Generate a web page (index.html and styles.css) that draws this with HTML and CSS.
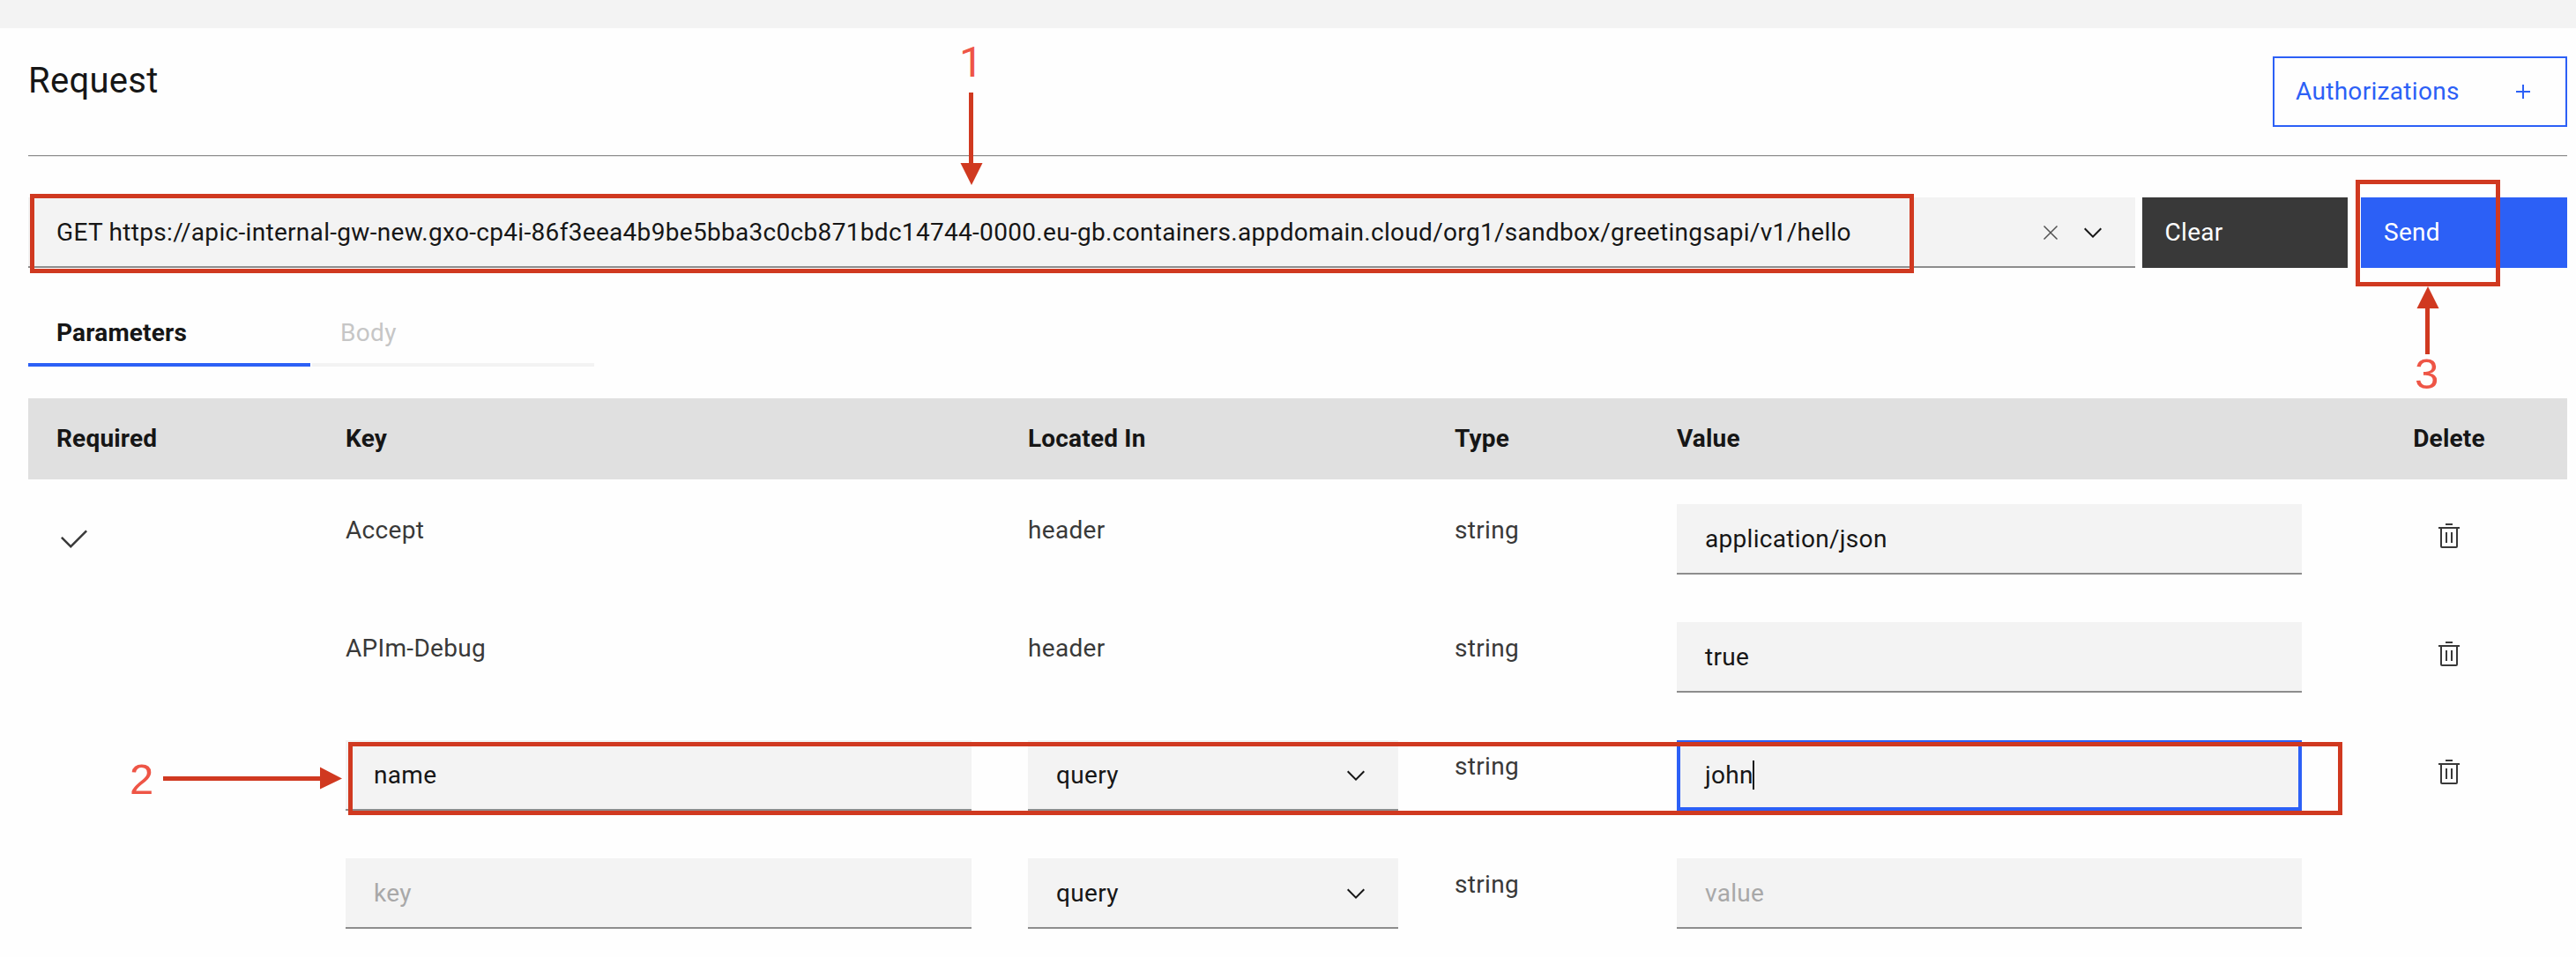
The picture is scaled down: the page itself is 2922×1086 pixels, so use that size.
FILE: index.html
```html
<!DOCTYPE html>
<html lang="en">
<head>
<meta charset="utf-8">
<title>Request</title>
<link rel="stylesheet" href="styles.css">
</head>
<body>
<svg class="sprite" aria-hidden="true">
  <symbol id="chevron" viewBox="0 0 16 16"><path d="M8 11L3 6 3.7 5.3 8 9.6 12.3 5.3 13 6z"/></symbol>
  <symbol id="trash" viewBox="0 0 32 32"><path d="M12 12H14V24H12zM18 12H20V24H18z"/><path fill-rule="evenodd" d="M4 6V8H6V28a2 2 0 002 2H24a2 2 0 002-2V8h2V6zM8 28V8H24V28z"/><path d="M12 2H20V4H12z"/></symbol>
</svg>
<main class="page">
  <header class="heading">
    <h1 class="title">Request</h1>
    <button class="btn btn-outline">Authorizations
      <svg class="icon" viewBox="0 0 32 32"><path d="M17 15V8H15v7H8v2h7v7h2V17h7V15z"/></svg>
    </button>
  </header>

  <section class="url-bar">
    <div class="field url-field">
      <span class="url">GET https://apic-internal-gw-new.gxo-cp4i-86f3eea4b9be5bba3c0cb871bdc14744-0000.eu-gb.containers.appdomain.cloud/org1/sandbox/greetingsapi/v1/hello</span>
      <svg class="icon icon-close" viewBox="0 0 32 32"><path d="M8.5 8.500l15 15M23.500 8.500l-15 15"/></svg>
      <svg class="icon"><use href="#chevron"/></svg>
    </div>
    <button class="btn btn-dark">Clear</button>
    <button class="btn btn-primary">Send</button>
  </section>

  <nav class="tabs">
    <div class="tab tab-active">Parameters</div>
    <div class="tab">Body</div>
  </nav>

  <section class="table">
    <div class="row row-head">
      <div class="cell-req">Required</div><div>Key</div><div>Located In</div><div>Type</div><div>Value</div><div class="cell-del">Delete</div>
    </div>
    <div class="row">
      <div class="cell-req"><svg class="icon check" viewBox="0 0 32 32"><path d="M13 24L4 15 5.414 13.586 13 21.171 26.586 7.586 28 9z"/></svg></div>
      <div class="text">Accept</div><div class="text">header</div><div class="text">string</div>
      <div class="field value">application/json</div>
      <div class="cell-del"><svg class="icon trash"><use href="#trash"/></svg></div>
    </div>
    <div class="row">
      <div></div>
      <div class="text">APIm-Debug</div><div class="text">header</div><div class="text">string</div>
      <div class="field value">true</div>
      <div class="cell-del"><svg class="icon trash"><use href="#trash"/></svg></div>
    </div>
    <div class="row">
      <div></div>
      <div class="field key">name</div>
      <div class="field select">query<svg class="icon"><use href="#chevron"/></svg></div>
      <div class="text">string</div>
      <div class="field value focused"><span class="typed">john</span></div>
      <div class="cell-del"><svg class="icon trash"><use href="#trash"/></svg></div>
    </div>
    <div class="row">
      <div></div>
      <div class="field key placeholder">key</div>
      <div class="field select">query<svg class="icon"><use href="#chevron"/></svg></div>
      <div class="text">string</div>
      <div class="field value placeholder">value</div>
      <div></div>
    </div>
  </section>
</main>

<div class="mark mark-url"></div>
<div class="mark mark-row"></div>
<div class="mark mark-send"></div>
<svg class="arrows" viewBox="0 0 2922 1086" aria-hidden="true">
  <path d="M1099 105h5v80h10.500L1102 210 1089.500 185H1099z"/>
  <path d="M185 881h178V870.500L388 883.500 363 895.500V886H185z"/>
  <path d="M2751 402V350H2741.500L2754 325 2766.500 350H2756v52z"/>
</svg>
<span class="num num-1">1</span>
<span class="num num-2">2</span>
<span class="num num-3">3</span>
</body>
</html>
```

FILE: styles.css
```css
* { box-sizing: border-box; }

body {
  margin: 0;
  position: relative;
  height: 1086px;
  overflow: hidden;
  background: #fefefe;
  color: #161616;
  font: 400 28px/36px Roboto, "Liberation Sans", sans-serif;
  letter-spacing: 0.31px;
}

.sprite { position: absolute; width: 0; height: 0; }

.page {
  border-top: 32px solid #f3f3f3;
  padding: 0 10px 0 32px;
}

.icon { display: block; flex: none; width: 32px; height: 32px; fill: currentColor; }

.heading {
  display: flex;
  justify-content: space-between;
  align-items: flex-start;
  height: 146px;
  padding-top: 32px;
  border-bottom: 1px solid #e4e4e4;
  box-shadow: inset 0 -1px #8d8d8d;
}

.title { margin: 2px 0 0; font-size: 40px; line-height: 52px; font-weight: 400; letter-spacing: 0.3px; }

.btn {
  display: flex;
  align-items: center;
  justify-content: space-between;
  height: 80px;
  padding: 0 26px;
  border: 0;
  font: inherit;
  letter-spacing: inherit;
  color: #fff;
}
.btn-outline { width: 334px; padding: 0 32px 0 24px; border: 2px solid #2c60f6; background: none; color: #2c60f6; }
.btn-dark { width: 233px; padding: 0 25.5px; background: #393939; }
.btn-primary { width: 234px; margin-left: 15px; background: #2c60f6; }

.url-bar { display: flex; margin-top: 46px; }

.field {
  display: flex;
  align-items: center;
  height: 80px;
  padding: 0 32px;
  background: #f3f3f3;
  box-shadow: inset 0 -2px #8d8d8d;
}
.url-field { flex: 1; margin-right: 8px; gap: 16px; }
.url { flex: 1; white-space: nowrap; }
.icon-close { fill: none; stroke: #525252; stroke-width: 1.5; }

.tabs { display: flex; gap: 2px; margin-top: 32px; }
.tab { width: 320px; height: 80px; padding: 24px 32px 0; border-bottom: 4px solid #f3f3f3; color: #c6c6c6; }
.tab-active { border-color: #2c60f6; color: #161616; font-weight: 700; letter-spacing: 0.18px; }

.table { margin-top: 36px; }
.row {
  display: grid;
  grid-template-columns: 360px 774px 484px 252px 835px 82px;
  align-items: start;
  height: 134px;
  padding-top: 28px;
  color: #393939;
}
.row-head { height: 92px; background: #e0e0e0; color: #161616; font-weight: 700; letter-spacing: 0.18px; }
.cell-req { padding-left: 32px; }
.cell-del { display: flex; justify-content: center; }
.text { padding-top: 12px; }
.check { width: 40px; height: 40px; margin-top: 20px; }
.trash { margin-top: 20px; }
.row .field { color: #161616; }
.key { width: 710px; }
.select { width: 420px; justify-content: space-between; }
.value { width: 709px; }
.row .placeholder { color: #a8a8a8; }
.row .focused { box-shadow: inset 0 0 0 4px #2c60f6; }
.typed { position: relative; }
.typed::after { content: ""; position: absolute; right: -1px; top: 1px; width: 2px; height: 33px; background: #161616; }

/* Annotations laid over the form */
.mark { position: absolute; border: 5px solid #d03920; }
.mark-url { left: 34px; top: 220px; width: 2137px; height: 90px; }
.mark-row { left: 395px; top: 842px; width: 2262px; height: 83px; }
.mark-send { left: 2672px; top: 204px; width: 164px; height: 121px; }
.arrows { position: absolute; left: 0; top: 0; width: 2922px; height: 1086px; fill: #d03920; }
.num { position: absolute; color: #ee5546; font: 400 49px/56px "Liberation Sans", sans-serif; letter-spacing: 0; }
.num-1 { left: 1088px; top: 43px; font-size: 48px; font-family: Roboto, sans-serif; }
.num-2 { left: 147px; top: 856px; }
.num-3 { left: 2739px; top: 396px; }
```
